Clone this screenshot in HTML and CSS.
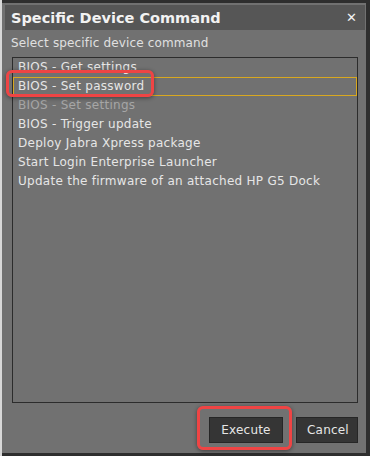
FILE: index.html
```html
<!DOCTYPE html>
<html lang="en">
<head>
  <meta charset="UTF-8">
  <title>Specific Device Command</title>
  <link rel="stylesheet" href="styles.css">
</head>
<body>
  <div class="dialog">
    <div class="title-bar">
      <span class="title">Specific Device Command</span>
      <span class="close">&#x2715;</span>
    </div>

    <div class="content">
      <div class="prompt">Select specific device command</div>

      <ul class="command-list">
        <li>BIOS - Get settings</li>
        <li class="selected">BIOS - Set password</li>
        <li class="dim">BIOS - Set settings</li>
        <li>BIOS - Trigger update</li>
        <li>Deploy Jabra Xpress package</li>
        <li>Start Login Enterprise Launcher</li>
        <li>Update the firmware of an attached HP G5 Dock</li>
      </ul>

      <div class="buttons">
        <button type="button" class="btn" id="execute-btn">Execute</button>
        <button type="button" class="btn" id="cancel-btn">Cancel</button>
      </div>
    </div>

    <!-- annotation marks -->
    <div class="mark mark-item"></div>
    <div class="mark mark-execute"></div>
  </div>
</body>
</html>
```

FILE: styles.css
```css
html, body {
  margin: 0;
  height: 100%;
}

body {
  background: #2e2e2e;
  font-family: 'DejaVu Sans', sans-serif;
  color: #e6e6e6;
  box-sizing: border-box;
  padding: 3px 4px 3px 0;
  border-left: 2px solid #d8d8d8;
}

.dialog {
  position: relative;
  height: 100%;
  background: #717171;
  padding: 2px 1px 0 3px;
  box-sizing: border-box;
  display: flex;
  flex-direction: column;
}

.title-bar {
  height: 25px;
  background: #565656;
  display: flex;
  align-items: center;
  justify-content: space-between;
  padding: 0 8px 0 6px;
}

.title {
  font-weight: bold;
  font-size: 14.5px;
  color: #f2f2f2;
}

.close {
  font-size: 13px;
  font-weight: bold;
  color: #f2f2f2;
}

.content {
  flex: 1;
  display: flex;
  flex-direction: column;
  padding: 6px 7px 10px 7px;
}

.prompt {
  font-size: 12px;
  letter-spacing: 0.15px;
  color: #e0e0e0;
  margin-left: -1px;
  height: 16px;
}

.command-list {
  flex: 1;
  list-style: none;
  margin: 5px 0 0 0;
  padding: 0;
  border: 1px solid #2c2c2c;
  overflow: hidden;
}

.command-list li {
  font-size: 12px;
  letter-spacing: 0.27px;
  height: 19px;
  line-height: 19px;
  padding-left: 5px;
  box-sizing: border-box;
}

.command-list li.selected {
  border: 1px solid #d8a820;
  line-height: 17px;
  padding-left: 4px;
}

.command-list li.dim {
  color: #a6a6a6;
}

.buttons {
  display: flex;
  justify-content: flex-end;
  gap: 13px;
  margin-top: 14px;
}

.btn {
  font-family: 'DejaVu Sans', sans-serif;
  font-size: 12px;
  letter-spacing: 0.2px;
  color: #e6e6e6;
  background: #353535;
  border: 1px solid #262626;
  height: 26px;
  padding: 0 10px;
}

#execute-btn {
  width: 74px;
}

#cancel-btn {
  width: 62px;
}

.mark {
  position: absolute;
  border: 3px solid #ef4444;
  border-radius: 6px;
  box-shadow: 0 1px 4px rgba(0, 0, 0, 0.45);
}

.mark-item {
  left: 4px;
  top: 67px;
  width: 142px;
  height: 21px;
}

.mark-execute {
  left: 195px;
  top: 403px;
  width: 89px;
  height: 38px;
}
```
